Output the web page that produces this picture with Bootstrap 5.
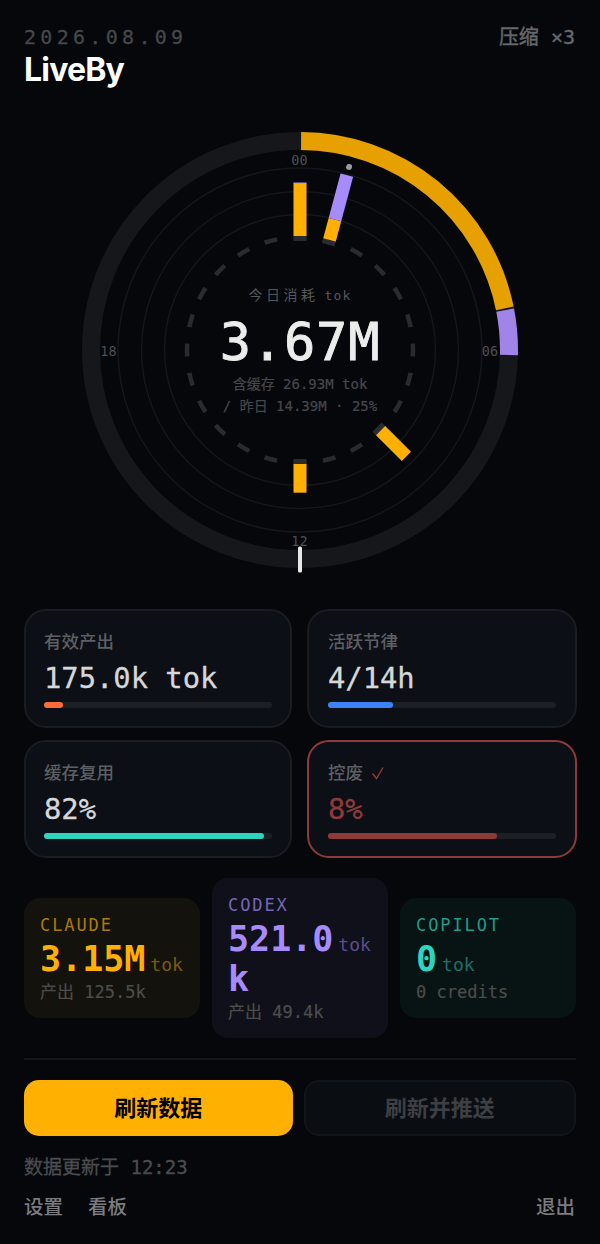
<!DOCTYPE html>
<html lang="zh-CN">
<head>
    <meta charset="UTF-8">
    <meta name="viewport" content="width=device-width, initial-scale=1.0">
    <link href="https://cdn.jsdelivr.net/npm/bootstrap@5.3.2/dist/css/bootstrap.min.css" rel="stylesheet"/>
    <script src="https://cdn.jsdelivr.net/npm/bootstrap@5.3.2/dist/js/bootstrap.bundle.min.js"></script>
    <title>LiveBy</title>
    <style>
        body {
            background-color: #05070b;
            color: #e8e8e8;
            font-family: "Inter", "Noto Sans CJK SC", sans-serif;
        }
        .mono { font-family: "DejaVu Sans Mono", "Noto Sans CJK SC", monospace; }
        .page { width: 600px; height: 1244px; padding: 0 24px; overflow: hidden; }

        .top-bar { height: 110px; padding-top: 24px; }
        .top-date { font-size: 20px; line-height: 26px; letter-spacing: 4.3px; color: #45474b; -webkit-text-stroke: .3px; }
        .top-title { font-size: 32px; line-height: 38px; font-weight: 700; letter-spacing: -0.8px; color: #fff; margin-top: 1px; }
        .top-mode { font-size: 20px; line-height: 26px; color: #66686b; margin-right: 1px; -webkit-text-stroke: .4px; }

        .dial { width: 552px; height: 480px; position: relative; }
        .dial svg { display: block; }
        .dial-label { font-size: 13.5px; fill: #4c4e52; text-anchor: middle; }
        .dial-center { position: absolute; left: 0; right: 0; top: 175px; text-align: center; }
        .dial-head { font-size: 14px; line-height: 20px; letter-spacing: 3.5px; color: #55575b; }
        .dial-unit { font-size: 13px; letter-spacing: 1.2px; margin-left: 6px; }
        .dial-value { font-size: 52px; line-height: 58px; letter-spacing: .8px; color: #ececec; margin-top: 7px; -webkit-text-stroke: .9px; }
        .dial-sub { font-size: 14px; line-height: 22px; color: #46484c; -webkit-text-stroke: .2px; }
        .dial-gap { margin-top: 2px; }

        .stat-row { --bs-gutter-x: 16px; --bs-gutter-y: 12px; margin-top: 7px; }
        .stat-box {
            height: 118.5px;
            padding: 18px 18px 0;
            background: #0c0f15;
            border: 2px solid #1a1c20;
            border-radius: 22px;
        }
        .stat-wide { margin: 0 -1px; padding-left: 19px; padding-right: 19px; }
        .stat-box.alert-box { border-color: #8f3a3a; }
        .stat-name { font-size: 17.5px; line-height: 26px; font-weight: 500; color: #5c5f63; }
        .stat-num { font-size: 28.8px; line-height: 36px; color: #d6d7d8; margin-top: 5px; -webkit-text-stroke: .3px; }
        .alert-box .stat-num { color: #8f3a3a; }
        .stat-track { height: 6px; background: #1c1f24; border-radius: 3px; margin-top: 6px; }
        .stat-fill { height: 6px; border-radius: 3px; }

        .src-row { gap: 12px; margin-top: 20px; }
        .src-box { width: 176px; padding: 16px 16px 14px; border-radius: 16px; }
        .src-name { font-size: 17px; line-height: 22px; letter-spacing: 1.9px; }
        .src-num { font-size: 35px; line-height: 40px; font-weight: 700; margin-top: 3px; }
        .src-unit { font-size: 18px; line-height: 1; font-weight: 400; margin-left: 5px; }
        .src-note { font-size: 17px; line-height: 24px; color: #4c4d4b; margin-top: 1px; -webkit-text-stroke: .2px; }
        .src-amber { background: #14120c; }
        .src-amber .src-name { color: #ad7a05; }
        .src-amber .src-num { color: #ffb000; }
        .src-amber .src-unit { color: #7c5a08; }
        .src-violet { background: #0f1019; }
        .src-violet .src-name { color: #7766b8; }
        .src-violet .src-num { color: #a78bfa; }
        .src-violet .src-unit { color: #5a4e8c; }
        .src-teal { background: #081313; }
        .src-teal .src-name { color: #1f9a8b; }
        .src-teal .src-num { color: #2dd4bf; }
        .src-teal .src-unit { color: #1c7067; }

        .split-line { height: 2px; background: #14161a; margin-top: 20px; }
        .act-row { gap: 11px; margin-top: 20px; }
        .act-btn {
            flex: 1 1 0;
            height: 56px;
            font-size: 22px;
            font-weight: 600;
            border-radius: 15px;
            padding: 0;
        }
        .act-main, .act-main:hover { background: #ffb000; color: #000; border: 0; }
        .act-off, .act-off:hover { background: #0a0d12; color: #3d3f43; border: 2px solid #11141a; }
        .stamp { font-size: 19px; line-height: 26px; color: #4a4c50; margin-top: 18px; -webkit-text-stroke: .3px; }
        .foot-row { margin-top: 14px; font-size: 19.5px; line-height: 26px; font-weight: 500; }
        .foot-row a { color: #7b7c7f; text-decoration: none; }
        .foot-links { gap: 25px; }
        .foot-end { margin-right: 1px; }
    </style>
</head>
<body>
    <div class="page">
        <div class="top-bar d-flex justify-content-between align-items-start">
            <div>
                <div class="top-date mono">2026.08.09</div>
                <div class="top-title">LiveBy</div>
            </div>
            <div class="top-mode mono">压缩 ×3</div>
        </div>

        <div class="dial">
            <svg width="552" height="480" viewBox="24 110 552 480" xmlns="http://www.w3.org/2000/svg">
                <!-- rings -->
                <circle cx="300" cy="350" r="209" fill="none" stroke="#15171b" stroke-width="18"/>
                <circle cx="300" cy="350" r="182" fill="none" stroke="#14161a" stroke-width="1.5"/>
                <circle cx="300" cy="350" r="158.500" fill="none" stroke="#14161a" stroke-width="1.5"/>
                <circle cx="300" cy="350" r="135.500" fill="none" stroke="#14161a" stroke-width="1.5"/>
                <!-- hour ticks -->
                <circle cx="300" cy="350" r="113" fill="none" stroke="#2a2b2e" stroke-width="4.500" pathLength="240" stroke-dasharray="4.400 5.600" stroke-dashoffset="2.200"/>
                <!-- usage arc -->
                <g transform="rotate(-90 300 350)">
                    <circle cx="300" cy="350" r="209" fill="none" stroke="#e6a000" stroke-width="18" pathLength="360" stroke-dasharray="78.200 281.800" stroke-dashoffset="-0.300"/>
                    <circle cx="300" cy="350" r="209" fill="none" stroke="#a084e8" stroke-width="18" pathLength="360" stroke-dasharray="12.400 347.600" stroke-dashoffset="-79"/>
                </g>
                <!-- hour bars -->
                <rect x="293.500" y="236" width="13" height="5" fill="#2a2b2e"/>
                <rect x="293.500" y="183" width="13" height="53" fill="#ffb000"/>
                <rect x="293.500" y="182.500" width="13" height="1" fill="#a78bfa"/>
                <g transform="rotate(15 300 350)">
                    <rect x="293.500" y="236" width="13" height="5" fill="#2a2b2e"/>
                    <rect x="293.500" y="215" width="13" height="21" fill="#ffb000"/>
                    <rect x="293.500" y="169" width="13" height="46" fill="#a78bfa"/>
                    <circle cx="300" cy="160.500" r="3" fill="#9a9a9e"/>
                </g>
                <g transform="rotate(135 300 350)">
                    <rect x="293.500" y="236" width="13" height="5" fill="#2a2b2e"/>
                    <rect x="293.500" y="199.500" width="13" height="36.500" fill="#ffb000"/>
                </g>
                <g transform="rotate(180 300 350)">
                    <rect x="293.500" y="236" width="13" height="5" fill="#2a2b2e"/>
                    <rect x="293.500" y="207.300" width="13" height="28.700" fill="#ffb000"/>
                </g>
                <!-- now marker -->
                <rect x="298" y="546.500" width="4" height="26" rx="1.500" fill="#e8e8e8"/>
                <text class="dial-label mono" x="299.500" y="165">00</text>
                <text class="dial-label mono" x="490" y="355.500">06</text>
                <text class="dial-label mono" x="299.500" y="546">12</text>
                <text class="dial-label mono" x="108.500" y="355.500">18</text>
            </svg>
            <div class="dial-center mono">
                <div class="dial-head">今日消耗<span class="dial-unit">tok</span></div>
                <div class="dial-value">3.67M</div>
                <div class="dial-sub dial-gap">含缓存 26.93M tok</div>
                <div class="dial-sub">/ 昨日 14.39M · 25%</div>
            </div>
        </div>

        <div class="row stat-row">
            <div class="col-6">
                <div class="stat-box">
                    <div class="stat-name">有效产出</div>
                    <div class="stat-num mono">175.0k tok</div>
                    <div class="stat-track"><div class="stat-fill" style="width: 8.3%; background: #ff6b35"></div></div>
                </div>
            </div>
            <div class="col-6">
                <div class="stat-box stat-wide">
                    <div class="stat-name">活跃节律</div>
                    <div class="stat-num mono">4/14h</div>
                    <div class="stat-track"><div class="stat-fill" style="width: 28.5%; background: #3b82f6"></div></div>
                </div>
            </div>
            <div class="col-6">
                <div class="stat-box">
                    <div class="stat-name">缓存复用</div>
                    <div class="stat-num mono">82%</div>
                    <div class="stat-track"><div class="stat-fill" style="width: 96.5%; background: #2dd4bf"></div></div>
                </div>
            </div>
            <div class="col-6">
                <div class="stat-box stat-wide alert-box">
                    <div class="stat-name d-flex align-items-center gap-2">控废
                        <svg width="14" height="14" viewBox="0 0 14 14" xmlns="http://www.w3.org/2000/svg"><path d="M1.500 7.500 L5.500 12.500 L12 1.500" fill="none" stroke="#8f3a3a" stroke-width="1.400"/></svg>
                    </div>
                    <div class="stat-num mono">8%</div>
                    <div class="stat-track"><div class="stat-fill" style="width: 74%; background: #8f3a3a"></div></div>
                </div>
            </div>
        </div>

        <div class="d-flex align-items-center src-row mono">
            <div class="src-box src-amber">
                <div class="src-name">CLAUDE</div>
                <div class="src-num">3.15M<span class="src-unit">tok</span></div>
                <div class="src-note">产出 125.5k</div>
            </div>
            <div class="src-box src-violet">
                <div class="src-name">CODEX</div>
                <div class="src-num">521.0<span class="src-unit">tok</span><br>k</div>
                <div class="src-note">产出 49.4k</div>
            </div>
            <div class="src-box src-teal">
                <div class="src-name">COPILOT</div>
                <div class="src-num">0<span class="src-unit">tok</span></div>
                <div class="src-note">0 credits</div>
            </div>
        </div>

        <div class="split-line"></div>

        <div class="d-flex act-row">
            <button type="button" class="btn act-btn act-main">刷新数据</button>
            <button type="button" class="btn act-btn act-off">刷新并推送</button>
        </div>

        <div class="stamp mono">数据更新于 12:23</div>

        <div class="d-flex justify-content-between foot-row">
            <div class="d-flex foot-links"><a href="#">设置</a><a href="#">看板</a></div>
            <a href="#" class="foot-end">退出</a>
        </div>
    </div>
</body>
</html>
